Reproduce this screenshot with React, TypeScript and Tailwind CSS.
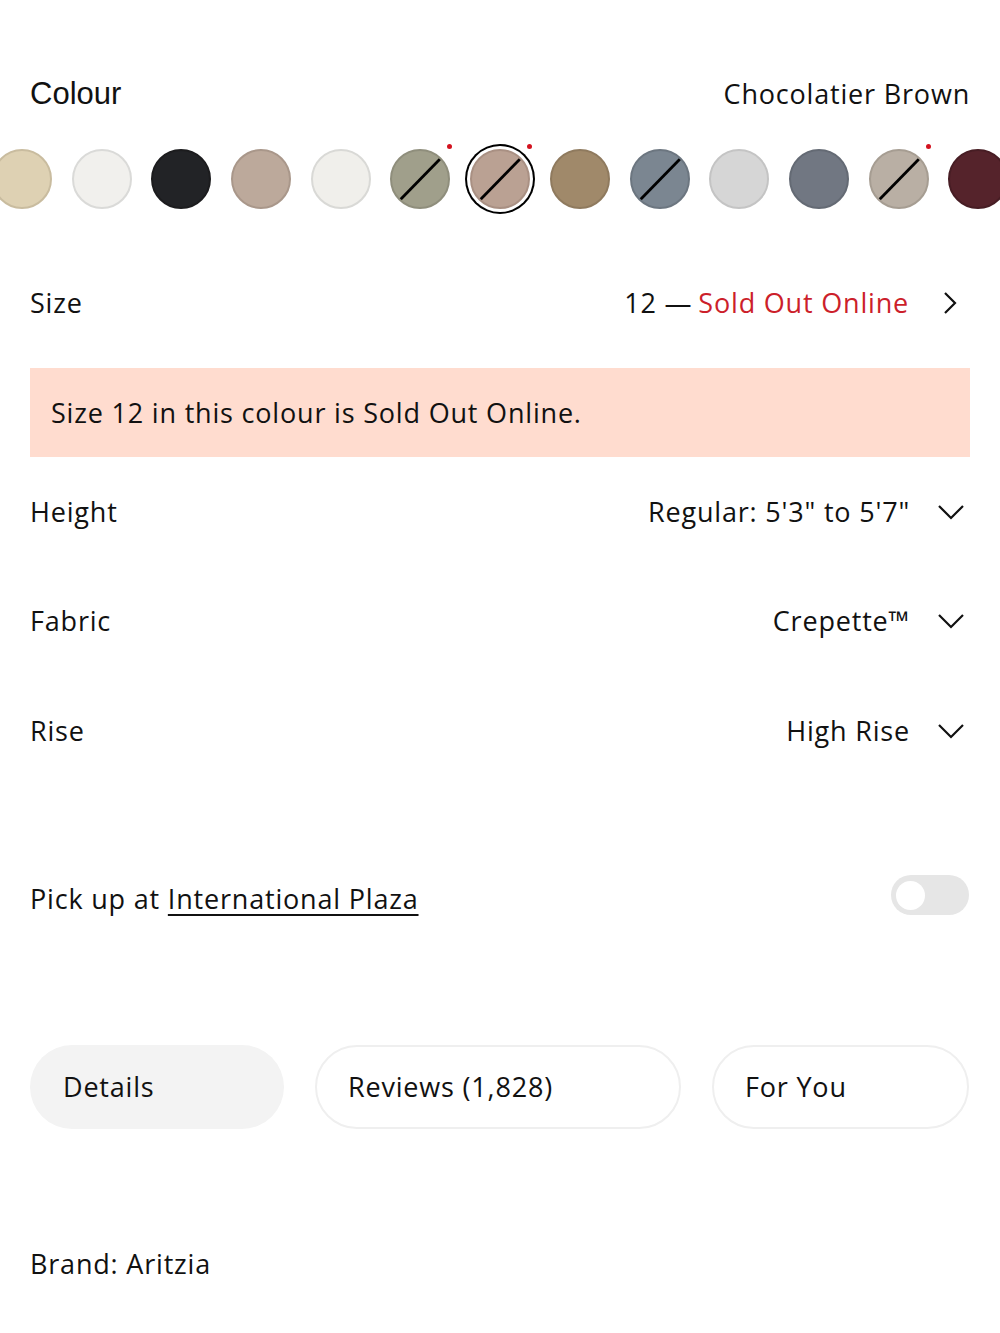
import React from "react";

interface Swatch {
  color: string;
  border: string;
  crossed?: boolean;
  dot?: boolean;
  selected?: boolean;
}

const swatches: Swatch[] = [
  { color: "#ded1b3", border: "#c9bc9f" },
  { color: "#f1f0ed", border: "#dadad8" },
  { color: "#222326", border: "#1c1c1e" },
  { color: "#bca99b", border: "#a9978a" },
  { color: "#f0efeb", border: "#d9d9d6" },
  { color: "#a09f8b", border: "#8f8e7c", crossed: true, dot: true },
  { color: "#baa193", border: "#a99083", crossed: true, dot: true, selected: true },
  { color: "#a0896a", border: "#8f7a5e" },
  { color: "#7b8691", border: "#6c7680", crossed: true },
  { color: "#d6d6d6", border: "#c4c4c4" },
  { color: "#717782", border: "#646a74" },
  { color: "#b9afa4", border: "#a69d92", crossed: true, dot: true },
  { color: "#55232b", border: "#471d24" },
];

const ChevronDown = () => (
  <svg width="28" height="16" viewBox="0 0 28 16" fill="none">
    <path d="M2 2l12 12L26 2" stroke="#111" strokeWidth="2.2" />
  </svg>
);

const ChevronRight = () => (
  <svg width="14" height="24" viewBox="0 0 14 24" fill="none">
    <path d="M2 2l10 10L2 22" stroke="#111" strokeWidth="2.2" />
  </svg>
);

const OptionRow: React.FC<{ label: string; value: string }> = ({ label, value }) => (
  <div className="flex h-[109.5px] items-center justify-between">
    <span>{label}</span>
    <div className="flex items-center">
      <span>{value}</span>
      <span className="ml-[27px] mr-[5px] flex w-[28px] justify-center">
        <ChevronDown />
      </span>
    </div>
  </div>
);

export default function App() {
  return (
    <div
      className="min-h-[1333px] w-[1000px] overflow-hidden bg-white text-[27px] leading-[34px] tracking-[0.03em] text-[#111]"
      style={{ fontFamily: "'Open Sans', 'Liberation Sans', sans-serif" }}
    >
      <div className="px-[30px] pt-[77px]">
        <div className="flex items-center justify-between">
          <span className="text-[31px] tracking-normal" style={{ fontFamily: "'Liberation Sans', sans-serif" }}>
            Colour
          </span>
          <span>Chocolatier Brown</span>
        </div>
      </div>

      <div className="mt-[30px] flex gap-[19.7px] py-[8px]">
        {swatches.map((s, i) => (
          <div key={i} className={`relative h-[60px] w-[60px] shrink-0 ${i === 0 ? "-ml-[8px]" : ""}`}>
            <div
              className={`h-[60px] w-[60px] overflow-hidden rounded-full border-2 ${
                s.selected ? "ring-2 ring-black ring-offset-[3px] ring-offset-white" : ""
              }`}
              style={{ backgroundColor: s.color, borderColor: s.border }}
            >
              {s.crossed && (
                <svg width="56" height="56" viewBox="0 0 56 56">
                  <line x1="7" y1="50" x2="49" y2="7" stroke="#000" strokeWidth="2.8" />
                </svg>
              )}
            </div>
            {s.dot && (
              <div className="absolute -right-[2px] -top-[5px] h-[5px] w-[5px] rounded-full bg-[#d3121f]" />
            )}
          </div>
        ))}
      </div>

      <div className="px-[30px]">
        <div className="mt-[31px] flex h-[110px] items-center justify-between">
          <span>Size</span>
          <div className="flex items-center">
            <span>12 —</span>
            <span className="ml-[6px] text-[#cc1f2b]">Sold Out Online</span>
            <span className="ml-[34px] mr-[13px] flex">
              <ChevronRight />
            </span>
          </div>
        </div>

        <div className="mt-[10px] flex h-[89px] items-center bg-[#ffdccf] px-[21px]">
          Size 12 in this colour is Sold Out Online.
        </div>

        <OptionRow label="Height" value={'Regular: 5\'3" to 5\'7"'} />
        <OptionRow label="Fabric" value="Crepette™" />
        <OptionRow label="Rise" value="High Rise" />

        <div className="mt-[89px] flex items-center justify-between">
          <span className="mt-[7px]">
            Pick up at{" "}
            <span className="underline decoration-[2px] underline-offset-[5px]">International Plaza</span>
          </span>
          <div className="mr-[1px] flex h-[40px] w-[78px] items-center rounded-full bg-[#e6e6e6] px-[5px]">
            <div className="h-[29px] w-[29px] rounded-full bg-white" />
          </div>
        </div>

        <div className="mt-[129px] flex gap-[31px]">
          <div className="flex h-[84px] w-[254px] items-center rounded-full bg-[#f3f3f3] pl-[33px]">Details</div>
          <div className="flex h-[84px] w-[366px] items-center rounded-full border-2 border-[#efefef] pl-[31px]">
            Reviews (1,828)
          </div>
          <div className="flex h-[84px] w-[257px] items-center rounded-full border-2 border-[#efefef] pl-[31px]">
            For You
          </div>
        </div>

        <div className="mt-[118px]">Brand: Aritzia</div>
      </div>
    </div>
  );
}
